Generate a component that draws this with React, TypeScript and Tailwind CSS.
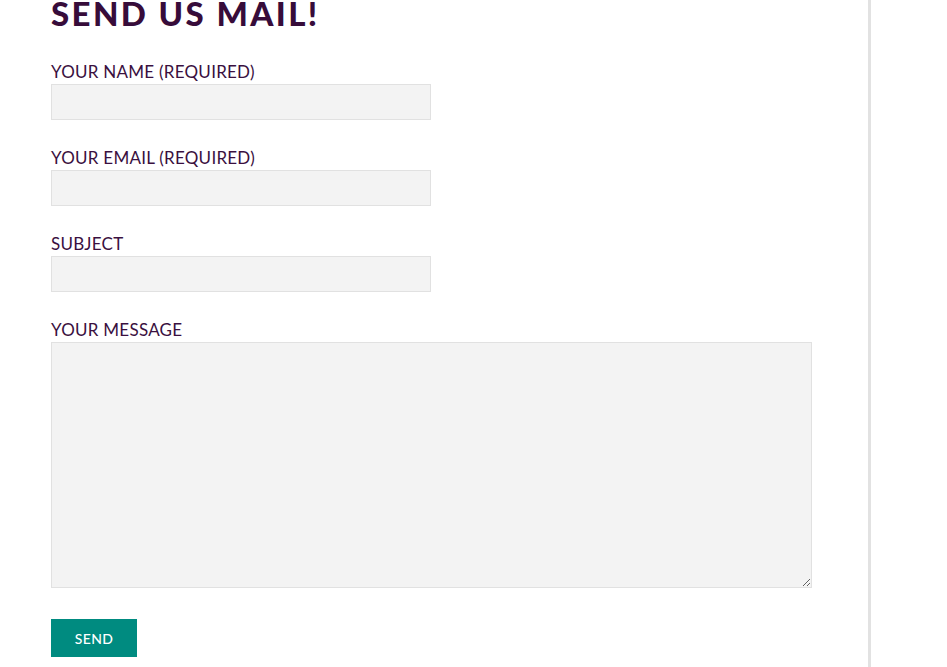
export default function App() {
  const fields = ["YOUR NAME (REQUIRED)", "YOUR EMAIL (REQUIRED)", "SUBJECT"];
  return (
    <div className="flex min-h-[667px] w-[947px] bg-white" style={{ fontFamily: "Lato, 'Liberation Sans', sans-serif" }}>
      <div className="w-[868px] shrink-0 pl-[51px]">
        <h1 className="-mt-[7px] text-[33px] leading-[40px] font-black tracking-[2.4px] text-[#370c3a]">SEND US MAIL!</h1>
        <form className="mt-[27px] flex flex-col">
          {fields.map((f) => (
            <div key={f} className="mb-[26px] flex flex-col">
              <label className="text-[17px] leading-[24px] tracking-[0.25px] text-[#3a1040]">{f}</label>
              <input className="h-[36px] w-[380px] border border-[#e1e1e1] bg-[#f3f3f3]" />
            </div>
          ))}
          <div className="flex flex-col">
            <label className="text-[17px] leading-[24px] tracking-[0.25px] text-[#3a1040]">YOUR MESSAGE</label>
            <textarea className="h-[246px] w-[761px] border border-[#e1e1e1] bg-[#f3f3f3]" />
          </div>
          <button type="button" className="mt-[31px] h-[38px] w-[86px] bg-[#008b80] text-[14px] font-medium tracking-[0.3px] text-white">
            SEND
          </button>
        </form>
      </div>
      <div className="w-[3px] shrink-0 bg-[#e2e2e2]" />
    </div>
  );
}
